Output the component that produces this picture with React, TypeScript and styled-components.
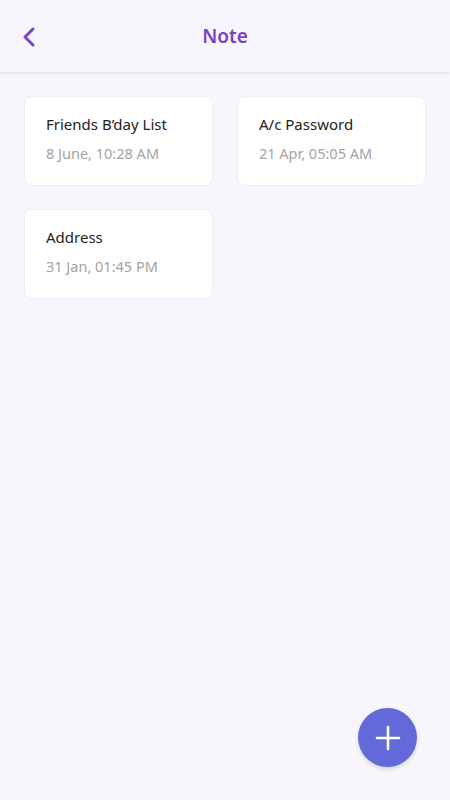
import styled, { createGlobalStyle } from "styled-components";

const GlobalStyle = createGlobalStyle`
  html, body {
    margin: 0;
    padding: 0;
    background: #f8f6fd;
    font-family: "Noto Sans", "Open Sans", sans-serif;
  }
  * { box-sizing: border-box; }
`

type Note = { title: string; date: string }

const notes: Note[] = [
  { title: "Friends B’day List", date: "8 June, 10:28 AM" },
  { title: "A/c Password", date: "21 Apr, 05:05 AM" },
  { title: "Address", date: "31 Jan, 01:45 PM" },
]

export default function App() {
  return (
    <Page>
      <GlobalStyle />
      <Header>
        <BackButton aria-label="back">
          <svg width="16" height="22" viewBox="0 0 16 22" fill="none">
            <path d="M12 3 L4 11 L12 19" stroke="#7b3fc4" strokeWidth="3" strokeLinecap="round" strokeLinejoin="round" />
          </svg>
        </BackButton>
        <Title>Note</Title>
      </Header>

      <Grid>
        {notes.map((n) => (
          <Card key={n.title}>
            <CardTitle>{n.title}</CardTitle>
            <CardDate>{n.date}</CardDate>
          </Card>
        ))}
      </Grid>

      <Fab aria-label="add">
        <svg width="28" height="28" viewBox="0 0 28 28">
          <path d="M14 3 V25 M3 14 H25" stroke="white" strokeWidth="2.6" strokeLinecap="round" />
        </svg>
      </Fab>
    </Page>
  )
}

const Page = styled.div`
  position: relative;
  width: 450px;
  height: 800px;
  overflow: hidden;
  background: #f8f6fd;
`

const Header = styled.header`
  position: relative;
  display: flex;
  align-items: center;
  justify-content: center;
  height: 72px;
  background: #f8f6fd;
  box-shadow: 0 1px 3px rgba(0, 0, 0, 0.1);
`

const BackButton = styled.div`
  position: absolute;
  left: 21px;
  top: 26px;
  display: flex;
  align-items: center;
`

const Title = styled.h1`
  margin: 0;
  font-size: 19px;
  font-weight: 600;
  color: #7b3fc4;
`

const Grid = styled.div`
  display: grid;
  grid-template-columns: 1fr 1fr;
  gap: 23px 24px;
  padding: 24px;
`

const Card = styled.div`
  height: 90px;
  background: #ffffff;
  border-radius: 8px;
  border: 1px solid #efedf6;
  padding: 16px 21px;
`

const CardTitle = styled.div`
  font-size: 15px;
  color: #222222;
  line-height: 22px;
`

const CardDate = styled.div`
  margin-top: 8px;
  font-size: 14.5px;
  color: #a3a3a3;
  line-height: 20px;
`

const Fab = styled.div`
  position: absolute;
  right: 33px;
  bottom: 33px;
  width: 59px;
  height: 59px;
  border-radius: 50%;
  background: #6469d9;
  display: flex;
  align-items: center;
  justify-content: center;
  box-shadow: 0 2px 4px rgba(0, 0, 0, 0.15);
`
